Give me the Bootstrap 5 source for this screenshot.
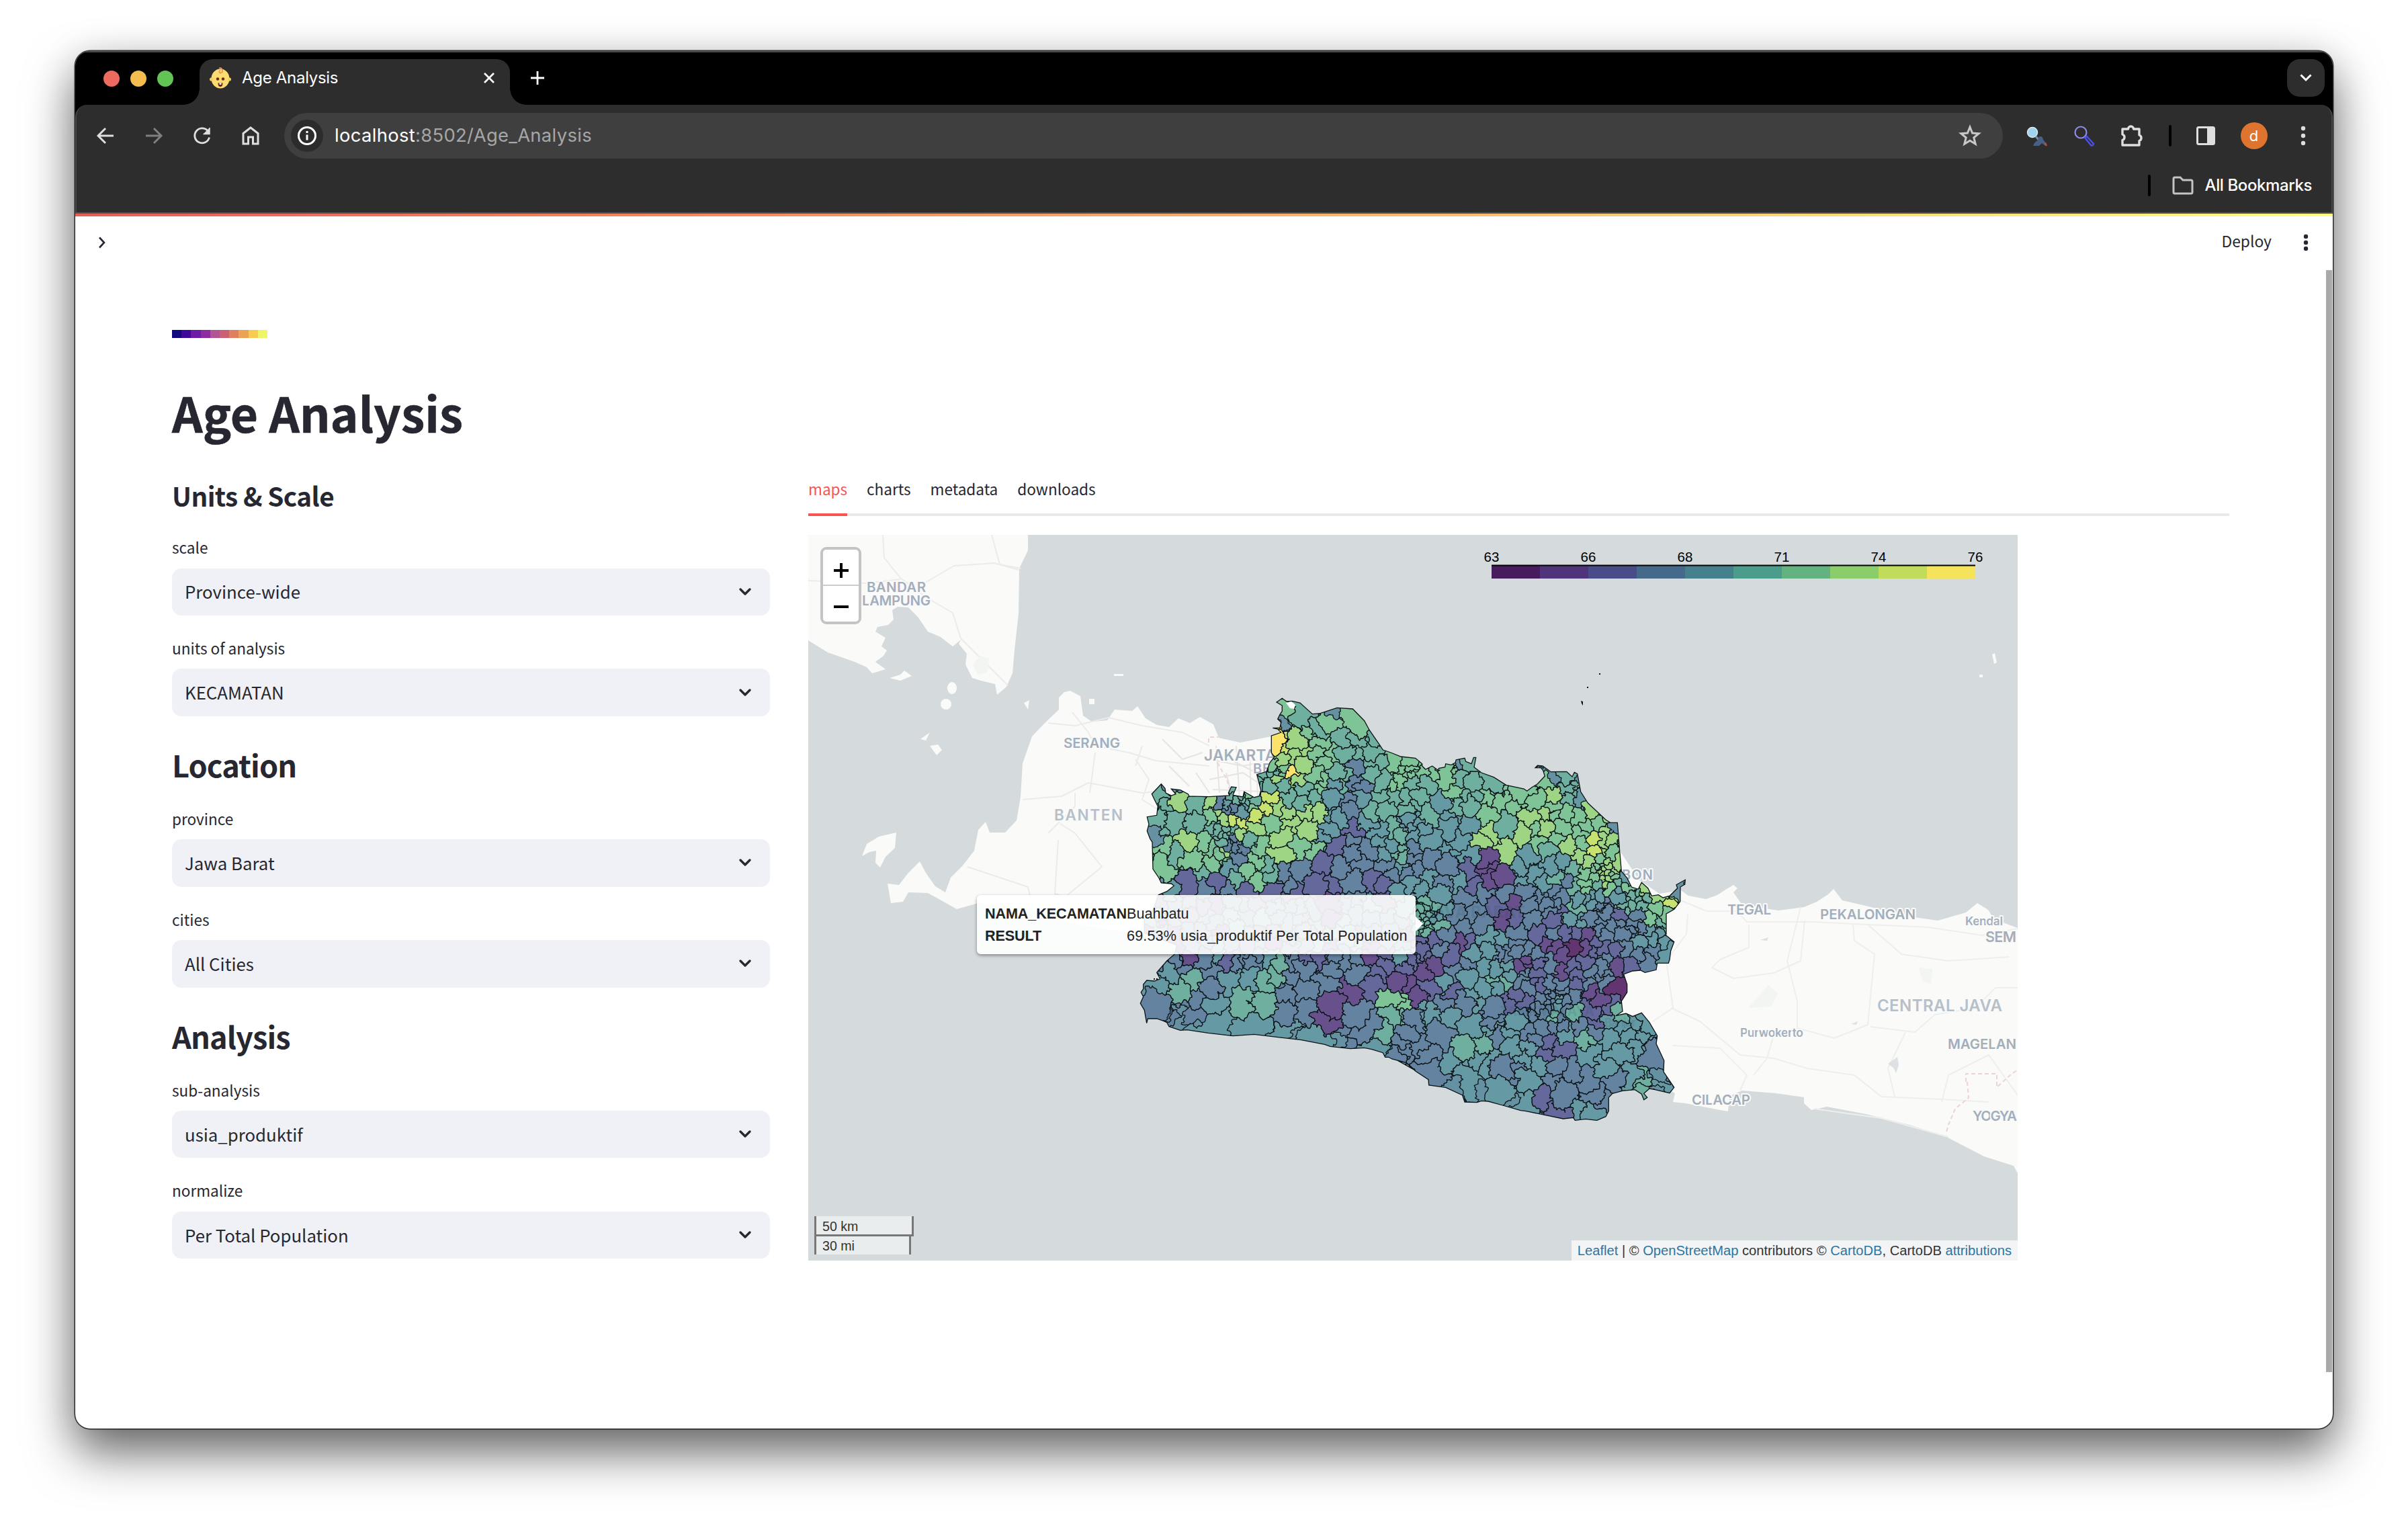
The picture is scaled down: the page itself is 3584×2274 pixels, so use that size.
<!DOCTYPE html>
<html lang="en">
<head>
<meta charset="utf-8">
<title>Age Analysis</title>
<link href="https://cdn.jsdelivr.net/npm/bootstrap@5.3.0/dist/css/bootstrap.min.css" rel="stylesheet">
<style>
html,body{height:2274px;width:3584px;overflow:hidden}
body{background:#fff;padding:76px 112px 148px;font-family:Inter,"Liberation Sans",sans-serif}
svg{display:block;flex:none}
.win{height:2050px;border-radius:22px;box-shadow:0 0 0 1.5px rgba(0,0,0,.75),0 36px 72px rgba(0,0,0,.56),0 10px 60px rgba(0,0,0,.14);overflow:hidden;background:#fff}
.strip{height:80px;background:#000;box-shadow:inset 0 2px 0 #4c4f4d;padding:0 6px 0 42px}
.light{width:24px;height:24px;border-radius:50%;margin-right:16px}
.lights{margin-top:2px;width:143px}
.tab-chip{width:462px;height:68px;background:#2d2d2d;border-radius:20px 20px 0 0;margin-top:12px;padding:0 22px 12px 15px;color:#fff;font-size:24px;position:relative}
.tab-chip::before,.tab-chip::after{content:"";position:absolute;bottom:0;width:24px;height:24px}
.tab-chip::before{left:-24px;background:radial-gradient(circle at 0 0,transparent 23.5px,#2d2d2d 24px)}
.tab-chip::after{right:-24px;background:radial-gradient(circle at 100% 0,transparent 23.5px,#2d2d2d 24px)}
.menu-btn{width:56px;height:56px;border-radius:19px;background:#2d2d2d;margin-right:6px}
.toolbar{background:#000}
.toolbar-in{background:#2d2d2d;border-radius:18px 18px 0 0;height:160px;border-left:2px solid #474747;border-right:2px solid #474747}
.nav-row{height:92px;padding:0 22px 0 28px}
.omni{height:68px;width:2558px;border-radius:34px;background:#3f3f3f;margin-left:34px;padding:0 32px 0 10px;font-size:27.4px}
.info{width:48px;height:48px;border-radius:50%;background:#2c2c2c;margin-right:17px}
.avatar{width:40px;height:40px;border-radius:50%;background:#de742e;color:#fff;font-size:22px}
.vbar{width:4px;height:32px;border-radius:2px;background:#000}
.marks{height:52px;padding:0 29px 0 0;margin-top:2px;font-size:24px;color:#fff;font-weight:500}
.accent{border-top:2px solid #565656;height:6px;background:linear-gradient(90deg,#ee5a55,#fffd80)}
.app{height:1804px;position:relative;color:#262730;font-family:"Noto Sans CJK JP","Noto Sans CJK SC",sans-serif;padding:0 10px 0 0}
.app-head{height:78px;padding:0 26px 0 35px;font-size:22.8px}
.thumb{position:absolute;right:1px;top:80px;width:9px;height:1640px;background:#a9a9a9}
.body-pad{padding:91px 144px 0}
.sw{width:14.2px;height:12px}
.pt{font-size:71.2px;font-weight:700;line-height:96px;margin:62px 0 -2px;-webkit-text-stroke:.6px #262730}
.ctl{width:890px;padding-top:52px}
.h-a{font-size:38.7px;line-height:52px;font-weight:700;margin:0;padding-bottom:3px;letter-spacing:-.55px}
.h-b{font-size:45.1px;line-height:60px;font-weight:700;margin:42px 0 0;padding-bottom:2px;letter-spacing:-.9px}
.lb{display:block;font-size:22.55px;line-height:36px;margin:30px 0 13.5px}
.sel{height:70.4px;border-radius:14px;background:#f0f1f6;padding:0 27px 0 19px;font-size:25.8px}
.viz{width:2115px;padding-top:41px}
.tabs{height:68px;border-bottom:4px solid #e9e9ea;font-size:22.55px;gap:29px}
.tabs span{height:68px;line-height:34px;padding-top:10px;border-bottom:4px solid transparent}
.tabs .on{color:#f9544f;border-color:#f9544f}
.map{width:1800px;height:1080px;margin-top:28px;position:relative;overflow:hidden;background:#d5dadd;font-family:"Liberation Sans",Arial,sans-serif}
.zoomer{position:absolute;left:18px;top:18px;width:61px;border:4px solid #c3c5c5;border-radius:9px}
.zoomer div{height:53px;background:#fff;padding-top:9px}
.zoomer div:first-child{border-bottom:2px solid #ccc;border-radius:5px 5px 0 0;height:54px}
.zoomer div:last-child{border-radius:0 0 5px 5px}
.tip{position:absolute;left:251px;top:536px;width:653px;height:88px;border-radius:6px;background:rgba(255,255,255,.9);box-shadow:0 2px 5px rgba(0,0,0,.4);padding:11px 12px;font-size:21.6px;line-height:33px;color:#222}
.tip::after{content:"";position:absolute;left:100%;top:32px;border:11px solid transparent;border-left-color:#fff}
.tip b{width:211px;display:inline-block;white-space:nowrap;letter-spacing:-.12px}
.tip .val{letter-spacing:.12px}
.attr{position:absolute;right:0;bottom:0;height:30px;background:rgba(255,255,255,.7);padding:0 9px;font-size:20.15px;line-height:31px;color:#333;white-space:nowrap}
.attr i{color:#2b76a3;font-style:normal}
.ruler{position:absolute;left:9px;bottom:9px;font-size:19.6px;line-height:30px;color:#333}
.ruler div{border:3px solid #777;border-top:0;background:rgba(255,255,255,.5);padding-left:9px;height:30px}
.ruler div+div{border-bottom:0;height:27px;line-height:28px}
.place{font-family:Inter,"Open Sans",sans-serif;font-weight:600;fill:#a3aebc;stroke:#fafaf9;stroke-width:4;paint-order:stroke;stroke-linejoin:round}
</style>
<script src="https://cdn.jsdelivr.net/npm/bootstrap@5.3.0/dist/js/bootstrap.bundle.min.js"></script>
</head>
<body>
<div class="win">
  <div class="strip d-flex align-items-center">
    <div class="lights d-flex"><span class="light" style="background:#ed6a5f"></span><span class="light" style="background:#f5bd4f"></span><span class="light" style="background:#61c455"></span></div>
    <div class="tab-chip d-flex align-items-center">
      <svg width="32" height="34" viewBox="0 0 32 34"><ellipse cx="16" cy="18" rx="13.5" ry="14.5" fill="#fbdc72"/><circle cx="2.6" cy="19" r="2.6" fill="#f6cf60"/><circle cx="29.4" cy="19" r="2.6" fill="#f6cf60"/><path d="M14 2.500c5-2 7 6 3 7-3 1-3.500-3-1-3.500" fill="none" stroke="#e8975a" stroke-width="1.800"/><circle cx="12" cy="18.500" r="2.200" fill="#6b2c16"/><circle cx="20" cy="18.500" r="2.200" fill="#6b2c16"/><path d="M12.500 24.500h7q0 5.500-3.500 5.500t-3.500-5.500z" fill="#6b1f1a"/><path d="M14.500 24.500h3v2.500h-3z" fill="#fff"/></svg>
      <span class="ms-3" style="letter-spacing:-.3px">Age Analysis</span>
      <svg class="ms-auto" width="18" height="18" viewBox="0 0 18 18" stroke="#fff" stroke-width="2.600"><path d="M2 2l14 14M16 2L2 16"/></svg>
    </div>
    <svg style="margin-left:31px" width="20" height="20" stroke="#fff" stroke-width="2.800"><path d="M10 0v20M0 10h20"/></svg>
    <div class="menu-btn ms-auto d-flex align-items-center justify-content-center"><svg width="18" height="12" fill="none" stroke="#fff" stroke-width="3"><path d="M1.500 1.500L9 9l7.500-7.500"/></svg></div>
  </div>
  <div class="toolbar"><div class="toolbar-in">
    <div class="nav-row d-flex align-items-center">
      <div class="d-flex" style="gap:40px;margin-left:-1px">
        <svg width="32" height="32" fill="none" stroke="#dedede" stroke-width="2.900"><path d="M28 16H6M16 5L5 16l11 11"/></svg>
        <svg width="32" height="32" fill="none" stroke="#808080" stroke-width="2.900"><path d="M4 16h22M16 5l11 11-11 11"/></svg>
        <svg width="32" height="32" fill="none" stroke="#dedede" stroke-width="2.900"><path d="M26.500 18.500A11 11 0 1 1 24 8.500"/><path d="M27 4v9.500h-9.500" fill="#dedede" stroke-width="1.500"/></svg>
        <svg width="32" height="32" fill="none" stroke="#dedede" stroke-width="3"><path d="M5 28V12.500L16 4l11 8.500V28h-7.500v-10h-7v10z"/></svg>
      </div>
      <div class="omni d-flex align-items-center">
        <div class="info d-flex align-items-center justify-content-center"><svg width="30" height="30" stroke="#fff" fill="none" stroke-width="3"><circle cx="15" cy="15" r="12.500"/><path d="M15 13.500v8M15 8v3"/></svg></div>
        <span style="color:#fff;letter-spacing:.33px">localhost<span style="color:#a6a6a6">:8502/Age_Analysis</span></span>
        <svg class="ms-auto" width="34" height="34" viewBox="0 0 34 34" fill="none" stroke="#c8c8c8" stroke-width="3"><path d="M17 4l3.600 9 9.600.7-7.400 6.200 2.400 9.400L17 24.200l-8.200 5.100 2.400-9.400L3.800 13.700l9.600-.7z"/></svg>
      </div>
      <div class="d-flex align-items-center ms-auto flex-grow-1 justify-content-between" style="padding:0 3px 0 33px">
        <svg width="34" height="34"><circle cx="11" cy="12" r="7.500" fill="#9fd3ee" stroke="#dce8f0" stroke-width="1.500"/><path d="M16 18l5 6" stroke="#7e8ca6" stroke-width="3"/><path d="M12 32q2-6 7-8l1-5q6-3 7 4l5 6-2 3-5-4-4 4z" fill="#4a5f86"/><path d="M30 28l2 4" stroke="#b5562c" stroke-width="2.500"/></svg>
        <svg width="34" height="34" fill="none"><circle cx="12" cy="12" r="8.500" stroke="#8e8ce8" stroke-width="2.200"/><path d="M18 20l3-2 10 11q-1 4-4 2z" stroke="#4a50e8" stroke-width="2.400"/></svg>
        <svg width="36" height="36" fill="none" stroke="#dedede" stroke-width="3.400"><path d="M4 8h8.500a4 4 0 0 1 8 0H29v9a4.500 4.500 0 0 1 0 8.500V32H4v-7.500a4.500 4.500 0 0 0 0-8.500z" stroke-linejoin="round"/></svg>
        <span class="vbar"></span>
        <svg width="30" height="30"><rect x="2.500" y="2.500" width="25" height="25" rx="2" fill="none" stroke="#dedede" stroke-width="3"/><path d="M17 2h11v26H17z" fill="#dedede"/></svg>
        <span class="avatar d-flex align-items-center justify-content-center">d</span>
        <svg width="34" height="34" fill="#dedede"><circle cx="17" cy="6" r="3.200"/><circle cx="17" cy="17" r="3.200"/><circle cx="17" cy="28" r="3.200"/></svg>
      </div>
    </div>
    <div class="marks d-flex align-items-center justify-content-end">
      <span class="vbar" style="margin-right:31px"></span>
      <svg width="34" height="28" fill="none" stroke="#c4c4c4" stroke-width="3"><path d="M3 24V4q0-2 2-2h8l4 4h12q2 0 2 2v16q0 2-2 2H5q-2 0-2-2z"/></svg>
      <span style="margin-left:16px;letter-spacing:-.4px">All Bookmarks</span>
    </div>
  </div></div>
  <div class="accent"></div>
  <div class="app">
    <div class="thumb"></div>
    <div class="app-head d-flex align-items-center">
      <svg width="10" height="18" fill="none" stroke="#262730" stroke-width="2.600"><path d="M1 1.500L8 9l-7 7.500"/></svg>
      <span class="ms-auto" style="margin-right:47px;margin-top:-3px">Deploy</span>
      <svg width="8" height="26" fill="#262730"><circle cx="4" cy="4" r="3.200"/><circle cx="4" cy="13" r="3.200"/><circle cx="4" cy="22" r="3.200"/></svg>
    </div>
    <div class="body-pad">
      <div class="d-flex" id="sw"></div>
      <h1 class="pt">Age Analysis</h1>
      <div class="d-flex" style="gap:57px">
        <div class="ctl">
          <h4 class="h-a">Units &amp; Scale</h4>
          <label class="lb">scale</label><div class="sel d-flex align-items-center justify-content-between">Province-wide</div>
          <label class="lb">units of analysis</label><div class="sel d-flex align-items-center justify-content-between">KECAMATAN</div>
          <h3 class="h-b">Location</h3>
          <label class="lb">province</label><div class="sel d-flex align-items-center justify-content-between">Jawa Barat</div>
          <label class="lb">cities</label><div class="sel d-flex align-items-center justify-content-between">All Cities</div>
          <h3 class="h-b">Analysis</h3>
          <label class="lb">sub-analysis</label><div class="sel d-flex align-items-center justify-content-between">usia_produktif</div>
          <label class="lb">normalize</label><div class="sel d-flex align-items-center justify-content-between">Per Total Population</div>
        </div>
        <div class="viz">
          <div class="tabs d-flex"><span class="on">maps</span><span>charts</span><span>metadata</span><span>downloads</span></div>
          <div class="map">
            <svg width="1800" height="1080" viewBox="1203 796 1800 1080">
              <g fill="#fafaf8">
                <path d="M1203 796H1530V819L1517 846L1516 913L1510 967L1507 1002L1498 1022L1484 1034L1481 1018L1460 1013L1447 1009L1437 989L1439 973L1427 958L1430 952L1418 962L1400 948L1381 940L1366 918L1352 904L1336 903L1328 908L1330 922L1322 930L1306 933L1303 940L1318 949L1312 962L1320 968L1315 976L1303 985L1318 996L1298 1002L1290 993L1272 985L1232 971L1203 953Z"/>
                <path d="M1324 1009L1340 1004L1346 998L1357 1006L1340 1013ZM1524 1046l8-4-2 14zM1370 1100l14-10-6 12zM1384 1110l12-2 6 8-8 8zM1621 1040h8v8h-8zM1658 1003h14v3h-14zM2965 974l4-2 3 14-4 2zM2946 1004h5v4h-5z"/>
                <ellipse cx="1417" cy="1024" rx="7" ry="9"/><ellipse cx="1408" cy="1048" rx="8" ry="8"/>
                <path d="M1576 1056L1576 1038L1584 1030L1593 1028L1608 1036L1612 1065L1625 1074L1648 1072L1659 1056L1685 1058L1693 1051L1705 1069L1722 1079L1740 1082L1754 1069L1771 1076L1786 1067L1806 1078L1814 1098L1846 1105L1892 1096L1930 1080L2000 1150L2400 1250L2440 1310L2470 1330L2502 1325L2513 1333L2539 1338L2556 1332L2570 1323L2580 1317L2586 1322L2580 1328L2591 1344L2620 1351L2647 1355L2685 1350L2704 1342L2721 1331L2729 1323L2742 1340L2777 1348L2807 1356L2842 1364L2884 1370L2926 1358L2943 1344L2959 1354L2968 1368L3003 1381V1746L2997 1735L2953 1721L2899 1693L2842 1674L2777 1658L2719 1647L2696 1652L2685 1642L2685 1633L2643 1627L2593 1623L2574 1631L2572 1654L2555 1651L2509 1642L2490 1640L2493 1627L2450 1600L2300 1590L2000 1500L1752 1420L1753 1404L1704 1392L1600 1375L1530 1352L1456 1344L1424 1353L1401 1340L1381 1329L1352 1328L1344 1342L1326 1344L1321 1315L1338 1317L1352 1299L1369 1282L1378 1299L1392 1319L1407 1328L1415 1306L1433 1288L1450 1266L1456 1235L1467 1223L1473 1239L1496 1239L1513 1221L1519 1186L1522 1136L1536 1096L1553 1078Z"/>
                <path d="M1283 1274L1290 1256L1308 1245L1334 1239L1332 1262L1318 1275L1310 1291L1303 1284L1304 1266L1294 1268Z"/>
              </g>
              <g fill="none" stroke="#ebebeb" stroke-width="2" stroke-linejoin="round">
                <path d="M1314 796L1316 830L1340 860L1380 890L1418 912L1430 950L1460 980L1490 1010L1500 1020M1203 864L1290 868L1340 862M1372 870L1420 842L1480 838L1516 848M1560 1076L1600 1080L1650 1068L1700 1080L1760 1090L1800 1110M1596 1060L1620 1090L1630 1110L1680 1120L1720 1132L1800 1140M1522 1190L1580 1185L1620 1165L1700 1180L1740 1176M1560 1240L1600 1200L1600 1180M1630 1120L1622 1180M1690 1130L1710 1160L1700 1190L1740 1215M1575 1250L1570 1330L1585 1335L1640 1290L1600 1240L1578 1226M1440 1290L1500 1310L1530 1320L1535 1342M1476 796L1488 840L1520 846M1700 1110L1690 1140"/>
                <path d="M2502 1340L2540 1356L2585 1356L2600 1372L2700 1372L2780 1376L2870 1380L2950 1392L3003 1382M2512 1360L2510 1390L2480 1430L2490 1500L2460 1520M2603 1376L2603 1410L2560 1428L2548 1440L2580 1456L2640 1448L2680 1430L2686 1370M2680 1350L2660 1430L2675 1490L2675 1530L2730 1545L2780 1525L2790 1420L2760 1400L2758 1376M2487 1500L2530 1520L2590 1570L2640 1575L2690 1590L2760 1600L2800 1632L2890 1636L2960 1640M2780 1376L2830 1420L2900 1430L2990 1424M2784 1528L2850 1536L2880 1510L2940 1500L2970 1470L3003 1470M2836 1536L2810 1590L2820 1632M2890 1640L2900 1600L2960 1570L3003 1630M2490 1556L2560 1560L2600 1600L2590 1623M2640 1540L2630 1575L2610 1600M2700 1650L2800 1664L2900 1692" stroke="#eeeeee"/>
                <path d="M1800 1130L1850 1140L1900 1130M1800 1160L1850 1150L1880 1170M1810 1110L1815 1180M1840 1110L1845 1190M1860 1120L1862 1190M1825 1150L1835 1190M1780 1150L1800 1180M1730 1100L1760 1130L1790 1120M1740 1140L1770 1170M1870 1140L1872 1185M1820 1125L1890 1160M1805 1175L1880 1178" stroke="#e6e4e5"/>
                <path d="M1799 1105v-8h14M1812 1135l14 25 5 18M2926 1610v-12h46v20l20-18 11-8M2928 1610l2 24-20 16-10 24-4 14" stroke="#ecd3d6" stroke-dasharray="6 4"/>
              </g>
              <g fill="#f2f5f2"><path d="M2602 1500l30-34 14 12-10 20zM2856 1440l20 2-2 22-12-4zM1448 990l10-14 14 4-2 20-14 4z"/></g>
              <path d="M2810 1583l14-10 2 12-4 12-4-8zM2620 1399l12-4-2 5zM2755 1524l10-4-2 5z" fill="#dde1e4"/>
              <g class="place" id="places"></g>
              <g id="choro"></g>
              <g fill="#22445c" opacity=".13" font-family="Inter" font-weight="700"><text x="2232" y="1512" font-size="20" textLength="141">TASIKMALAYA</text><text x="2388" y="1528" font-size="17" textLength="47">Banjar</text><text x="1801" y="1270" font-size="18" textLength="71">BOGOR</text><text x="2120" y="1366" font-size="24" textLength="150">JAVA BARAT</text></g>
              <path d="M2353 1043l3 1v6l-2-3zM2362 1022h2v2h-2zM2380 1002h2v2h-2zM1717 1456h2v2h-2zM1721 1456h2v2h-2z" fill="#111"/>
              <g id="legend" font-size="20.500" text-anchor="middle"></g>
            </svg>
            <div class="zoomer"><div class="d-flex align-items-center justify-content-center"><svg width="24" height="24" stroke="#000" stroke-width="4"><path d="M12 1v22M1 12h22"/></svg></div><div class="d-flex align-items-center justify-content-center"><svg width="24" height="24" stroke="#000" stroke-width="4"><path d="M1 12h22"/></svg></div></div>
            <div class="tip"><div class="text-nowrap"><b>NAMA_KECAMATAN</b>Buahbatu</div><div class="text-nowrap"><b>RESULT</b><span class="val">69.53% usia_produktif Per Total Population</span></div></div>
            <div class="ruler"><div style="width:148px">50 km</div><div style="width:144px">30 mi</div></div>
            <div class="attr"><i>Leaflet</i> | © <i>OpenStreetMap</i> contributors © <i>CartoDB</i>, CartoDB <i>attributions</i></div>
          </div>
        </div>
      </div>
    </div>
  </div>
</div>
<script>
// page swatches and select arrows
document.getElementById('sw').innerHTML=['#10097e','#40079a','#6b1ba5','#8f2ba0','#b15594','#cb5f73','#de7f5e','#eda356','#f8cc52','#eef566'].map(c=>`<span class="sw" style="background:${c}"></span>`).join('');
document.querySelectorAll('.sel').forEach(e=>e.insertAdjacentHTML('beforeend','<svg width="20" height="14" fill="none" stroke="#262730" stroke-width="3.400" stroke-linecap="round" stroke-linejoin="round"><path d="M3 3l7 7 7-7"/></svg>'));
// place names: text, x, baseline, width, size
document.getElementById('places').innerHTML=[['BANDAR',1290,881,88,20.5],['LAMPUNG',1283,901,102,20.5],['SERANG',1583,1113,84,20.5],['BANTEN',1569,1221,102,22.5],['JAKARTA',1792,1132,107,22.5],['BEKASI',1865,1151,76,20],['CIREBON',2364,1309,96,20],['TEGAL',2571,1361,65,20.5],['PEKALONGAN',2709,1368,142,20.5],['Kendal',2925,1377,56,17.5],['SEM',2955,1402,46,22],['CENTRAL JAVA',2794,1505,186,24],['Purwokerto',2590,1543,94,17.5],['MAGELAN',2899,1561,102,20.5],['CILACAP',2518,1644,87,20.5],['YOGYA',2936,1668,66,20.5]].map(p=>`<text x="${p[1]}" y="${p[2]}" textLength="${p[3]}" font-size="${p[4]}"${/BANT|CENT/.test(p[0])?' style="fill:#b6c0c9"':''}>${p[0]}</text>`).join('');
// legend
const LG=['#481b5c','#503479','#494c86','#45698b','#46808c','#4b9c8b','#62b380','#8bcd6b','#bfdc5a','#f6e35c'];
document.getElementById('legend').innerHTML=LG.map((c,i)=>`<rect x="${2220+72*i}" y="842" width="72.200" height="19" fill="${c}"/>`).join('')+'<path d="M2220 841.500h720" stroke="#000" stroke-width="2"/>'+[63,66,68,71,74,76].map((n,i)=>`<text x="${2220+144*i}" y="835.500">${n}</text>`).join('');
// districts: per tile an origin and class,x,y triples in thirds of a pixel
const CL=['#63346f','#68508d','#64689a','#6383a0','#6599a3','#6eaf9f','#7ec497','#9dd584','#c8e270','#fae26b'];
const T=[[1660,1020,`6,775,140 5,850,140 5,910,190 6,970,160 6,1060,150 9,728,262 8,765,270 7,825,250 6,865,220 6,905,260 6,980,300 5,1015,240 5,1090,235 5,1140,280 5,1065,310 5,1150,345 6,1235,340 6,1310,350 6,1250,440 5,1340,440 6,1345,390 3,1070,370 5,980,390 5,1030,400 5,1140,400 5,1190,430 5,1020,300 6,890,310 6,925,340 7,860,300 7,800,320 7,735,340 7,840,350 9,785,400 7,825,430 6,890,400 6,930,430 5,850,470 5,770,500 5,740,440 5,720,390 6,695,360 6,745,375 5,660,400 5,665,440 5,690,450 7,725,420 8,670,550 8,695,495 8,640,580 7,720,540 7,765,570 5,830,520 5,890,500 6,920,480 7,850,565 7,910,570 7,780,610 7,870,650 6,690,615 7,620,650 7,750,690 6,870,740 6,820,720 7,740,750 6,640,720 8,570,610 8,525,600 7,490,600 7,440,560 7,420,520 6,420,590 5,360,530 5,355,620 5,280,610 7,295,510 5,200,490 5,215,540 5,190,620 6,205,730 5,280,760 6,205,820 7,325,700 6,345,760 5,385,820 6,405,700 6,430,720 6,440,790 6,470,760 5,460,650 5,440,630 5,500,650 3,515,690 3,545,720 3,500,710 7,490,745 3,550,770 4,515,820 5,600,690 7,555,665 6,620,780 6,590,830 6,640,870 5,660,810 5,690,840 5,530,870 6,490,790 3,510,550 3,470,520 5,520,490 5,545,510 5,590,520 5,525,465 6,600,490 4,575,540 6,620,540 4,500,530 2,320,900 3,400,910 2,460,880 3,510,905 2,590,925 2,690,915 4,220,915 2,790,920 3,760,880 3,750,830 3,835,840 2,930,810 2,1000,720 2,1060,640 2,900,885 2,970,880 3,1060,880 3,1010,820 2,1160,870 2,1210,890 3,1060,740 3,1060,700 3,1100,790 3,1130,740 3,1050,560 3,1045,520 4,970,500 4,1100,500 4,960,570 4,950,640 4,920,680 4,1000,590 5,1180,500 5,1150,550 5,1200,545 4,1130,600 4,1180,660 5,1250,650 4,1300,630 4,1340,660 4,1340,600 5,1310,550 5,1300,500 5,1240,490 5,1280,750 3,1330,740 3,1210,800 4,1280,820 3,1240,840 4,1190,740 4,1220,710 4,1190,700 4,1320,880 4,1240,920 3,1080,430 3,1110,450 5,1020,440 4,980,440`],
[2080,1040,`6,20,290 6,60,310 6,130,340 6,215,350 6,255,305 5,330,300 5,275,355 5,340,375 5,400,360 6,450,390 6,260,415 5,120,380 5,90,430 6,0,380 5,70,480 4,200,470 5,260,480 5,140,520 5,330,440 5,330,480 6,400,440 6,470,450 6,540,420 6,620,440 6,680,360 5,740,345 5,750,400 5,795,410 5,770,450 4,825,460 7,695,435 7,870,510 6,390,520 6,520,490 6,700,470 7,680,520 7,670,570 6,715,530 6,760,510 6,800,520 6,730,570 7,590,540 7,560,600 5,490,570 7,410,600 7,370,640 7,480,680 6,620,590 6,625,650 6,720,620 6,850,570 6,890,550 7,940,570 7,965,640 8,870,630 8,880,680 7,920,640 7,905,690 6,830,600 6,830,650 7,770,660 7,810,700 7,860,730 6,960,700 7,980,740 5,680,690 4,590,690 4,570,740 4,330,700 4,230,700 4,320,560 4,230,560 4,240,530 4,60,570 4,100,600 4,130,630 4,280,630 4,60,540 5,10,600 5,10,680 3,70,700 3,80,760 3,150,720 3,40,780 3,220,750 3,200,820 4,270,810 4,140,800 2,320,780 2,340,830 1,400,760 1,390,710 1,470,800 1,430,810 4,560,800 4,620,790 4,690,740 4,740,730 3,740,800 5,780,750 6,840,780 5,710,800 6,900,750 6,880,800 7,920,780 6,960,780 7,970,770 6,840,830 5,800,840 5,900,830 6,950,840 5,990,820 4,1010,800 4,660,830 3,570,860 3,490,880 3,400,860 3,310,900 4,100,860 4,180,880 5,130,930 4,200,960 5,190,1010 5,130,1000 3,260,960 3,340,970 3,370,1010 2,460,930 1,510,910 1,480,970 2,520,980 3,590,920 3,600,980 3,670,920 3,640,880 3,700,860 3,690,950 2,740,960 2,700,980 5,800,930 4,780,980 4,820,890 4,870,900 3,910,920 3,920,960 2,990,980 3,900,1000 4,990,880 4,1000,860 6,1020,840 5,1060,880 5,1090,890 5,1020,930 5,1090,930 7,1100,860 7,1170,890 7,1250,870 7,1265,830 8,1210,930 6,1160,930 6,1130,980 5,1180,990 6,1190,960 4,1130,1040 3,1060,1000 3,1040,1040 3,960,1010 4,1170,1050`],
[2080,1340,`3,300,120 4,400,170 4,460,170 3,540,140 2,330,190 1,280,190 2,170,180 2,110,190 5,130,140 3,210,150 2,110,240 2,50,280 2,230,240 1,160,290 1,125,310 1,30,370 3,190,220 4,340,240 4,405,230 3,330,280 3,450,240 3,480,240 3,540,220 2,640,160 3,700,150 2,760,150 1,850,150 1,850,210 0,780,200 1,700,200 1,670,190 2,800,150 2,880,190 3,930,150 3,980,110 3,900,130 3,1010,150 3,1060,130 4,1080,180 5,1180,120 4,1140,160 4,1195,200 4,1190,250 3,1060,260 3,1120,270 3,1150,230 3,1010,220 2,920,220 2,970,230 2,870,220 3,930,260 1,980,290 2,1030,290 1,740,250 1,730,310 2,620,270 1,580,280 1,550,300 2,840,280 2,790,300 2,810,340 3,690,280 3,870,320 3,910,330 2,620,330 2,620,370 3,570,330 4,490,300 4,440,310 5,430,350 5,480,360 4,500,330 4,330,340 4,390,300 3,260,330 4,210,370 2,240,410 2,130,390 4,390,390 4,340,440 4,440,380 3,560,370 3,590,390 3,680,380 3,680,430 3,730,400 4,720,440 2,800,390 3,860,380 3,930,380 0,990,400 1,900,430 1,870,400 2,960,470 2,860,480 3,770,440 3,760,490 5,790,500 5,700,510 3,640,480 3,600,500 2,500,450 2,570,450 2,530,420 3,430,470 3,220,460 3,290,460 4,150,510 6,20,460 5,20,520 3,80,530 4,240,520 4,330,560 3,420,530 4,540,550 4,430,570 3,450,600 4,510,590 3,580,590 3,650,570 3,700,560 4,750,580 3,810,560 5,840,600 3,880,570 2,890,540 5,1000,520 4,960,550 4,1000,570 4,1080,540 4,1120,570 4,950,610 3,610,620 2,680,640 2,660,690 2,730,660 5,310,660 5,370,640 4,260,720 3,200,600 3,20,620 3,30,670 3,130,700 3,190,780 4,370,700 4,410,720 4,510,650 4,590,650 4,570,710 4,640,730 3,480,750 3,540,770 4,310,810 4,460,850 4,590,800 4,590,900 2,640,880 2,700,950 3,740,860 3,700,800 3,710,740 3,780,760 3,840,790 4,860,690 4,930,740 4,990,680 4,1060,660 3,1130,710 4,1130,640 4,1030,610 4,1100,600 3,970,790 4,1030,790 5,1090,800 4,1160,800 5,1100,870 3,880,870 4,830,920 4,870,950 3,910,890`],
[1660,1360,`4,180,310 5,350,300 5,290,350 3,200,430 3,290,440 3,370,370 3,410,340 3,360,460 4,430,400 3,430,260 3,520,210 3,620,210 4,520,290 4,610,290 5,720,220 5,715,280 5,670,300 4,460,470 5,590,390 5,660,400 4,620,500 4,800,530 4,900,540 3,740,440 3,750,370 3,840,350 3,850,440 3,760,300 3,840,220 3,960,240 3,960,200 3,940,300 3,1080,250 1,1050,330 1,970,410 1,940,480 3,1070,440 3,1010,570 3,1120,500 2,1170,270 2,1150,310 2,1210,210 2,1300,230 1,1280,310 1,1340,370 6,1250,390 5,1250,470 5,1190,530 4,1190,590 3,1290,540 3,1270,620 3,1350,600 4,1375,450 2,1370,160 3,290,210 4,230,250`]];
const S=[];
for(const [ox,oy,s] of T)for(const t of s.split(' ')){const [c,x,y]=t.split(',').map(Number);S.push([ox+x/3,oy+y/3,c])}
let rs=7;const rnd=()=>(rs=(rs*16807)%2147483647)/2147483647;
for(let x=1722;x<2100;x+=21)for(let y=1342;y<1420;y+=19)S.push([x+rnd()*14,y+rnd()*12,[3,2,3,1,4,3][Math.floor(rnd()*6)]]);
// dense urban districts: centre, spread, count
for(const [x,y,r,n] of [[2125,1368,18,26],[2388,1300,20,18],[2300,1502,34,20],[1832,1255,20,10],[1842,1190,22,7],[1895,1150,24,5],[2437,1345,18,12],[2350,1365,46,8],[2310,1420,60,5],[2400,1400,60,5]])
  for(let i=0;i<n;i++){const a=rnd()*6.283,d=Math.sqrt(rnd())*r,px=x+Math.cos(a)*d,py=y+Math.sin(a)*d;let b=1e9,c=3;for(const s of S){const q=(s[0]-px)**2+(s[1]-py)**2;if(q<b){b=q;c=s[2]}}if(b>9)S.push([px,py,c])}
const h=(a,b)=>{const v=Math.sin(a*12.9898+b*78.233)*43758.5453;return v-Math.floor(v)-.5};
function rough(a,b){ // wavering shared border, the same in both directions
  const f=a[0]<b[0]||(a[0]===b[0]&&a[1]<b[1]);const p=f?a:b,q=f?b:a;
  const rec=(p,q)=>{const dx=q[0]-p[0],dy=q[1]-p[1],L=Math.hypot(dx,dy);if(L<4)return[p];
    const k=h(p[0]+q[0],p[1]+q[1])*.85,t=.5+h(p[1]-q[0],p[0])*.4,m=[p[0]+dx*t-dy*k,p[1]+dy*t+dx*k];return rec(p,m).concat(rec(m,q))};
  const r=rec(p,q).concat([q]);return f?r:r.reverse()}
// corners closer than 1.5px become one, so neighbours meet exactly
const V=[];const snap=p=>{for(const v of V)if(Math.abs(v[0]-p[0])<1.5&&Math.abs(v[1]-p[1])<1.5)return v;V.push(p);return p};
let out='';
S.forEach((s,i)=>{let P=[[s[0]-70,s[1]-70],[s[0]+70,s[1]-70],[s[0]+70,s[1]+70],[s[0]-70,s[1]+70]];
  S.forEach((o,j)=>{if(i===j)return;const nx=o[0]-s[0],ny=o[1]-s[1];if(nx*nx+ny*ny>36000||nx*nx+ny*ny<1)return;
    const c=nx*(s[0]+o[0])/2+ny*(s[1]+o[1])/2,N=[];
    for(let k=0;k<P.length;k++){const a=P[k],b=P[(k+1)%P.length],da=a[0]*nx+a[1]*ny-c,db=b[0]*nx+b[1]*ny-c;
      if(da<=0)N.push(a);if((da<0&&db>0)||(da>0&&db<0)){const t=da/(da-db);N.push([a[0]+(b[0]-a[0])*t,a[1]+(b[1]-a[1])*t])}}P=N});
  P=P.map(snap);
  let d=[];P.forEach((p,k)=>{const q=P[(k+1)%P.length];if(p!==q)d=d.concat(rough(p,q).slice(0,-1))});
  if(d.length)out+=`<path fill="${CL[s[2]]}" d="M${d.map(p=>p[0].toFixed(1)+' '+p[1].toFixed(1)).join('L')}Z"/>`});
// province outline
const seg=(ox,oy,s)=>s.split(' ').map(t=>{const [x,y]=t.split(',');return (ox+x/3).toFixed(1)+' '+(oy+y/3).toFixed(1)}).join('L');
const outline='M'+[seg(1660,1020,'720,75 745,58 765,72 790,70 825,78 880,128 915,125 990,100 1060,105 1112,158 1135,200 1180,265 1195,288 1230,300 1275,318 1340,325 1370,350'),
seg(2080,1040,'110,300 125,315 155,300 180,318 185,310 212,305 215,290 240,295 258,285 262,272 300,265 305,280 330,290 340,262 350,262 342,305 375,330 430,350 485,385 565,402 578,412 600,395 625,380 658,345 650,320 640,308 615,308 625,298 648,300 685,326 755,325 780,348 790,328 803,335 818,415 850,465 930,540 950,553 982,553 992,680 1000,770 1025,800 1045,840 1075,850 1090,820 1118,845 1135,880 1165,875 1185,888 1215,880 1250,845 1245,830 1285,808 1283,828 1263,840 1262,905 1235,940 1200,960 1200,1050'),
seg(2080,1340,'1198,155 1235,185 1220,225 1215,265 1210,280 1160,280 1155,310 1105,322 1085,312 1050,315 1010,330 1025,375 1025,410 1000,450 1005,495 975,515 1020,505 1050,518 1090,502 1125,545 1160,605 1155,640 1190,715 1188,765 1235,835 1215,860 1150,845 1125,840 1100,862 1115,880 1100,890 1090,865 1060,845 1005,850 960,862 943,880 943,940 930,965 890,982 840,976 793,982 785,970 740,975 570,940 550,938 470,915 405,897 375,895 355,902 300,900 290,870 215,835 140,825 138,800 80,762 40,725 0,715'),
seg(1660,1360,'1235,648 1220,640 1205,640 1195,620 1145,605 1110,598 1050,602 960,592 935,583 830,563 720,550 620,538 525,545 415,532 320,518 290,520 240,503 230,485 215,478 185,468 145,468 140,488 130,430 112,400 125,370 115,350 125,335 125,315 140,297 175,300 200,290 185,262 230,210 265,180 275,140 130,85 130,20').replace(/^/,seg(1660,1360,'1340,700 1300,665')+'L'),
seg(1660,1020,'170,1000 193,935 230,920 262,895 250,885 205,882 195,860 168,820 165,700 155,685 142,650 150,620 142,587 185,580 190,540 175,510 163,485 205,440 222,460 225,480 250,492 270,485 250,462 290,467 325,485 330,495 420,497 510,492 505,480 518,453 540,455 525,490 570,498 575,475 620,500 642,495 650,470 638,420 632,398 675,385 690,345 710,320 697,300 697,225 740,210 725,195 703,190 735,190 740,165 725,150 735,130 745,115 745,90')].join('L')+'Z';
document.getElementById('choro').innerHTML=`<clipPath id="cp"><path d="${outline}"/></clipPath><path d="${outline}" fill="#6591a2"/><g clip-path="url(#cp)" stroke="#0c1418" stroke-width="1.300" stroke-linejoin="round">${out}</g><path d="${outline}" fill="none" stroke="#0c1418" stroke-width="1.300"/><path d="M1914 1046l8-2 6 5-2 6-6-1z" fill="#fff"/>`;
</script>
</body>
</html>
